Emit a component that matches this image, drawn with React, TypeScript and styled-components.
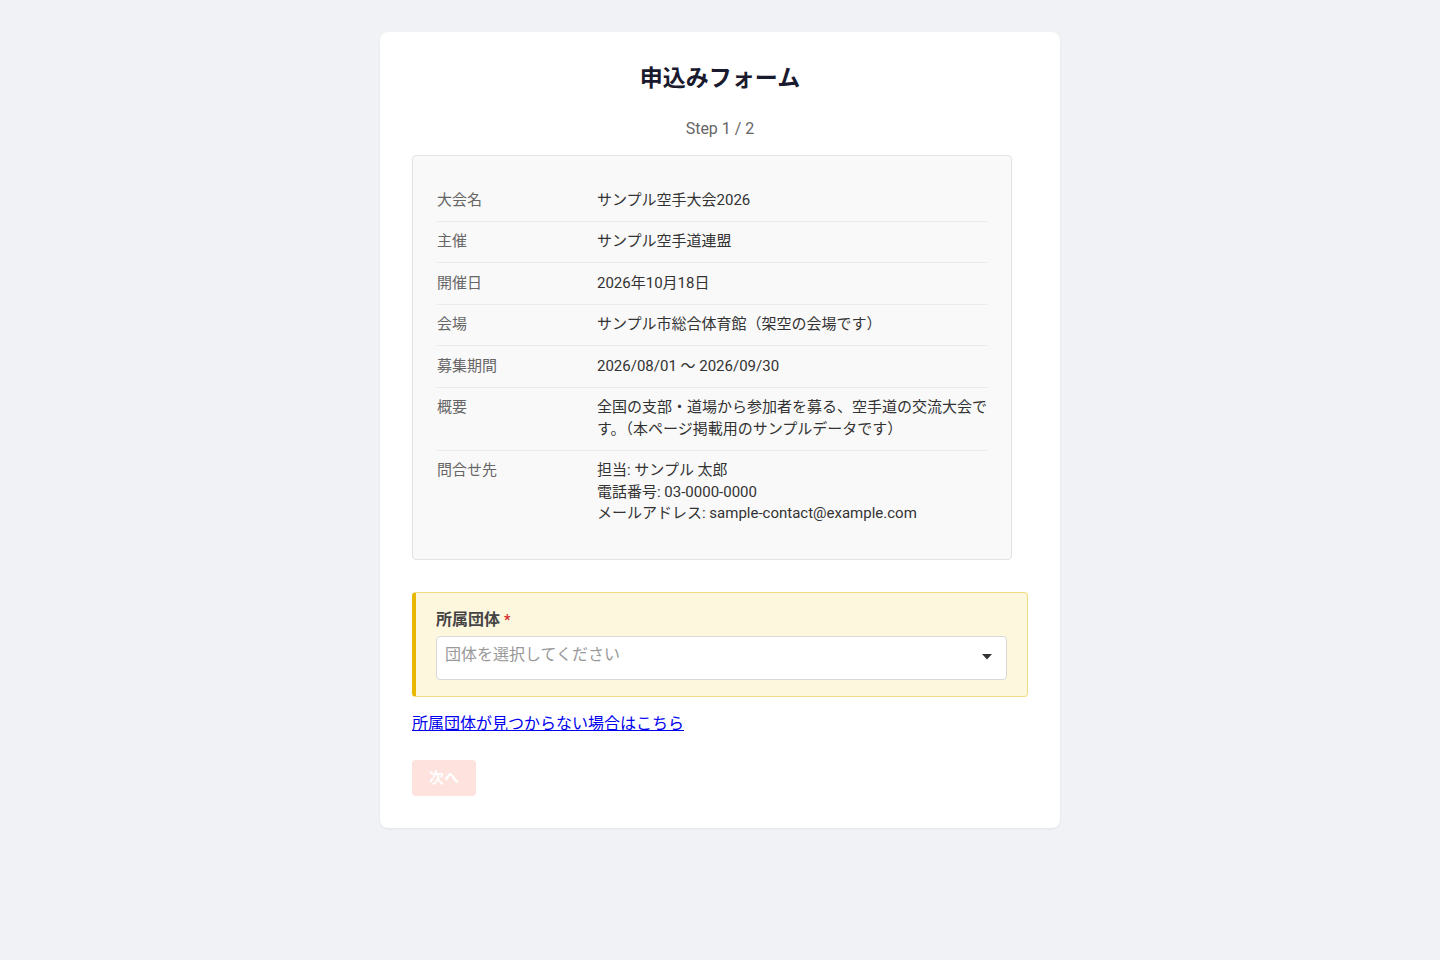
import styled, { createGlobalStyle } from 'styled-components';

const GlobalStyle = createGlobalStyle`
  html, body {
    margin: 0;
    padding: 0;
    background: #f0f2f5;
    font-family: Roboto, "Noto Sans CJK JP", sans-serif;
  }
`;

type InfoRow = { label: string; lines: string[] };

const rows: InfoRow[] = [
  { label: '大会名', lines: ['サンプル空手大会2026'] },
  { label: '主催', lines: ['サンプル空手道連盟'] },
  { label: '開催日', lines: ['2026年10月18日'] },
  { label: '会場', lines: ['サンプル市総合体育館（架空の会場です）'] },
  { label: '募集期間', lines: ['2026/08/01 〜 2026/09/30'] },
  {
    label: '概要',
    lines: ['全国の支部・道場から参加者を募る、空手道の交流大会です。（本ページ掲載用のサンプルデータです）'],
  },
  {
    label: '問合せ先',
    lines: ['担当: サンプル 太郎', '電話番号: 03-0000-0000', 'メールアドレス: sample-contact@example.com'],
  },
];

export default function App() {
  return (
    <SPage>
      <GlobalStyle />
      <SCard>
        <STitle>申込みフォーム</STitle>
        <SStep>Step 1 / 2</SStep>
        <SInfo>
          {rows.map((row, i) => (
            <SRow key={row.label} $last={i === rows.length - 1}>
              <SLabel>{row.label}</SLabel>
              <SValue>
                {row.lines.map((line) => (
                  <div key={line}>{line}</div>
                ))}
              </SValue>
            </SRow>
          ))}
        </SInfo>
        <SField>
          <SFieldLabel>
            所属団体<SRequired>*</SRequired>
          </SFieldLabel>
          <SSelect>
            <span>団体を選択してください</span>
            <svg width="10" height="6" viewBox="0 0 10 6">
              <path d="M0 0h10L5 5.5z" fill="#333" />
            </svg>
          </SSelect>
        </SField>
        <SLink href="#">所属団体が見つからない場合はこちら</SLink>
        <SButton disabled>次へ</SButton>
      </SCard>
    </SPage>
  );
}

const SPage = styled.div`
  min-height: 960px;
  padding-top: 32px;
  box-sizing: border-box;
`;

const SCard = styled.div`
  width: 680px;
  margin: 0 auto;
  box-sizing: border-box;
  padding: 32px;
  background: #fff;
  border-radius: 8px;
  box-shadow: 0 1px 3px rgba(0, 0, 0, 0.06);
  display: flex;
  flex-direction: column;
  align-items: flex-start;
`;

const STitle = styled.h1`
  align-self: stretch;
  margin: 0;
  text-align: center;
  font-size: 23px;
  line-height: 29px;
  font-weight: 700;
  color: #1a1a2e;
`;

const SStep = styled.div`
  align-self: stretch;
  margin-top: 24px;
  text-align: center;
  font-size: 16px;
  line-height: 24px;
  color: #666;
`;

const SInfo = styled.div`
  margin-top: 14px;
  width: 600px;
  box-sizing: border-box;
  padding: 24px 24px 25px;
  background: #f9f9f9;
  border: 1px solid #e3e3e3;
  border-radius: 4px;
`;

const SRow = styled.div<{ $last: boolean }>`
  display: flex;
  padding: 9.5px 0;
  font-size: 15px;
  line-height: 21.5px;
  border-bottom: ${(p) => (p.$last ? 'none' : '1px solid #ebebeb')};
`;

const SLabel = styled.div`
  flex: 0 0 160px;
  color: #666;
`;

const SValue = styled.div`
  flex: 1;
  color: #333;
`;

const SField = styled.div`
  margin-top: 32px;
  align-self: stretch;
  box-sizing: border-box;
  padding: 16px 20px;
  background: #fdf7de;
  border: 1px solid #f1dc84;
  border-left: 4px solid #e8b800;
  border-radius: 4px;
`;

const SFieldLabel = styled.div`
  font-size: 16px;
  line-height: 22px;
  font-weight: 700;
  color: #444;
  margin-bottom: 5px;
`;

const SRequired = styled.span`
  color: #d32f2f;
  margin-left: 4px;
  font-size: 14px;
`;

const SSelect = styled.div`
  height: 44px;
  box-sizing: border-box;
  padding: 6px 14px 0 8px;
  display: flex;
  align-items: flex-start;
  justify-content: space-between;
  background: #fff;
  border: 1px solid #d8d8d8;
  border-radius: 4px;
  font-size: 16px;
  line-height: 24px;
  color: #999;
  svg {
    margin-top: 11px;
  }
`;

const SLink = styled.a`
  margin-top: 15px;
  font-size: 16px;
  line-height: 24px;
  color: #0000ee;
  text-decoration: underline;
`;

const SButton = styled.button`
  margin-top: 24px;
  width: 64px;
  height: 36px;
  border: none;
  border-radius: 4px;
  background: #fde2dd;
  color: #fff;
  font-family: inherit;
  font-size: 15px;
  line-height: 20px;
  font-weight: 700;
  padding: 0;
`;
